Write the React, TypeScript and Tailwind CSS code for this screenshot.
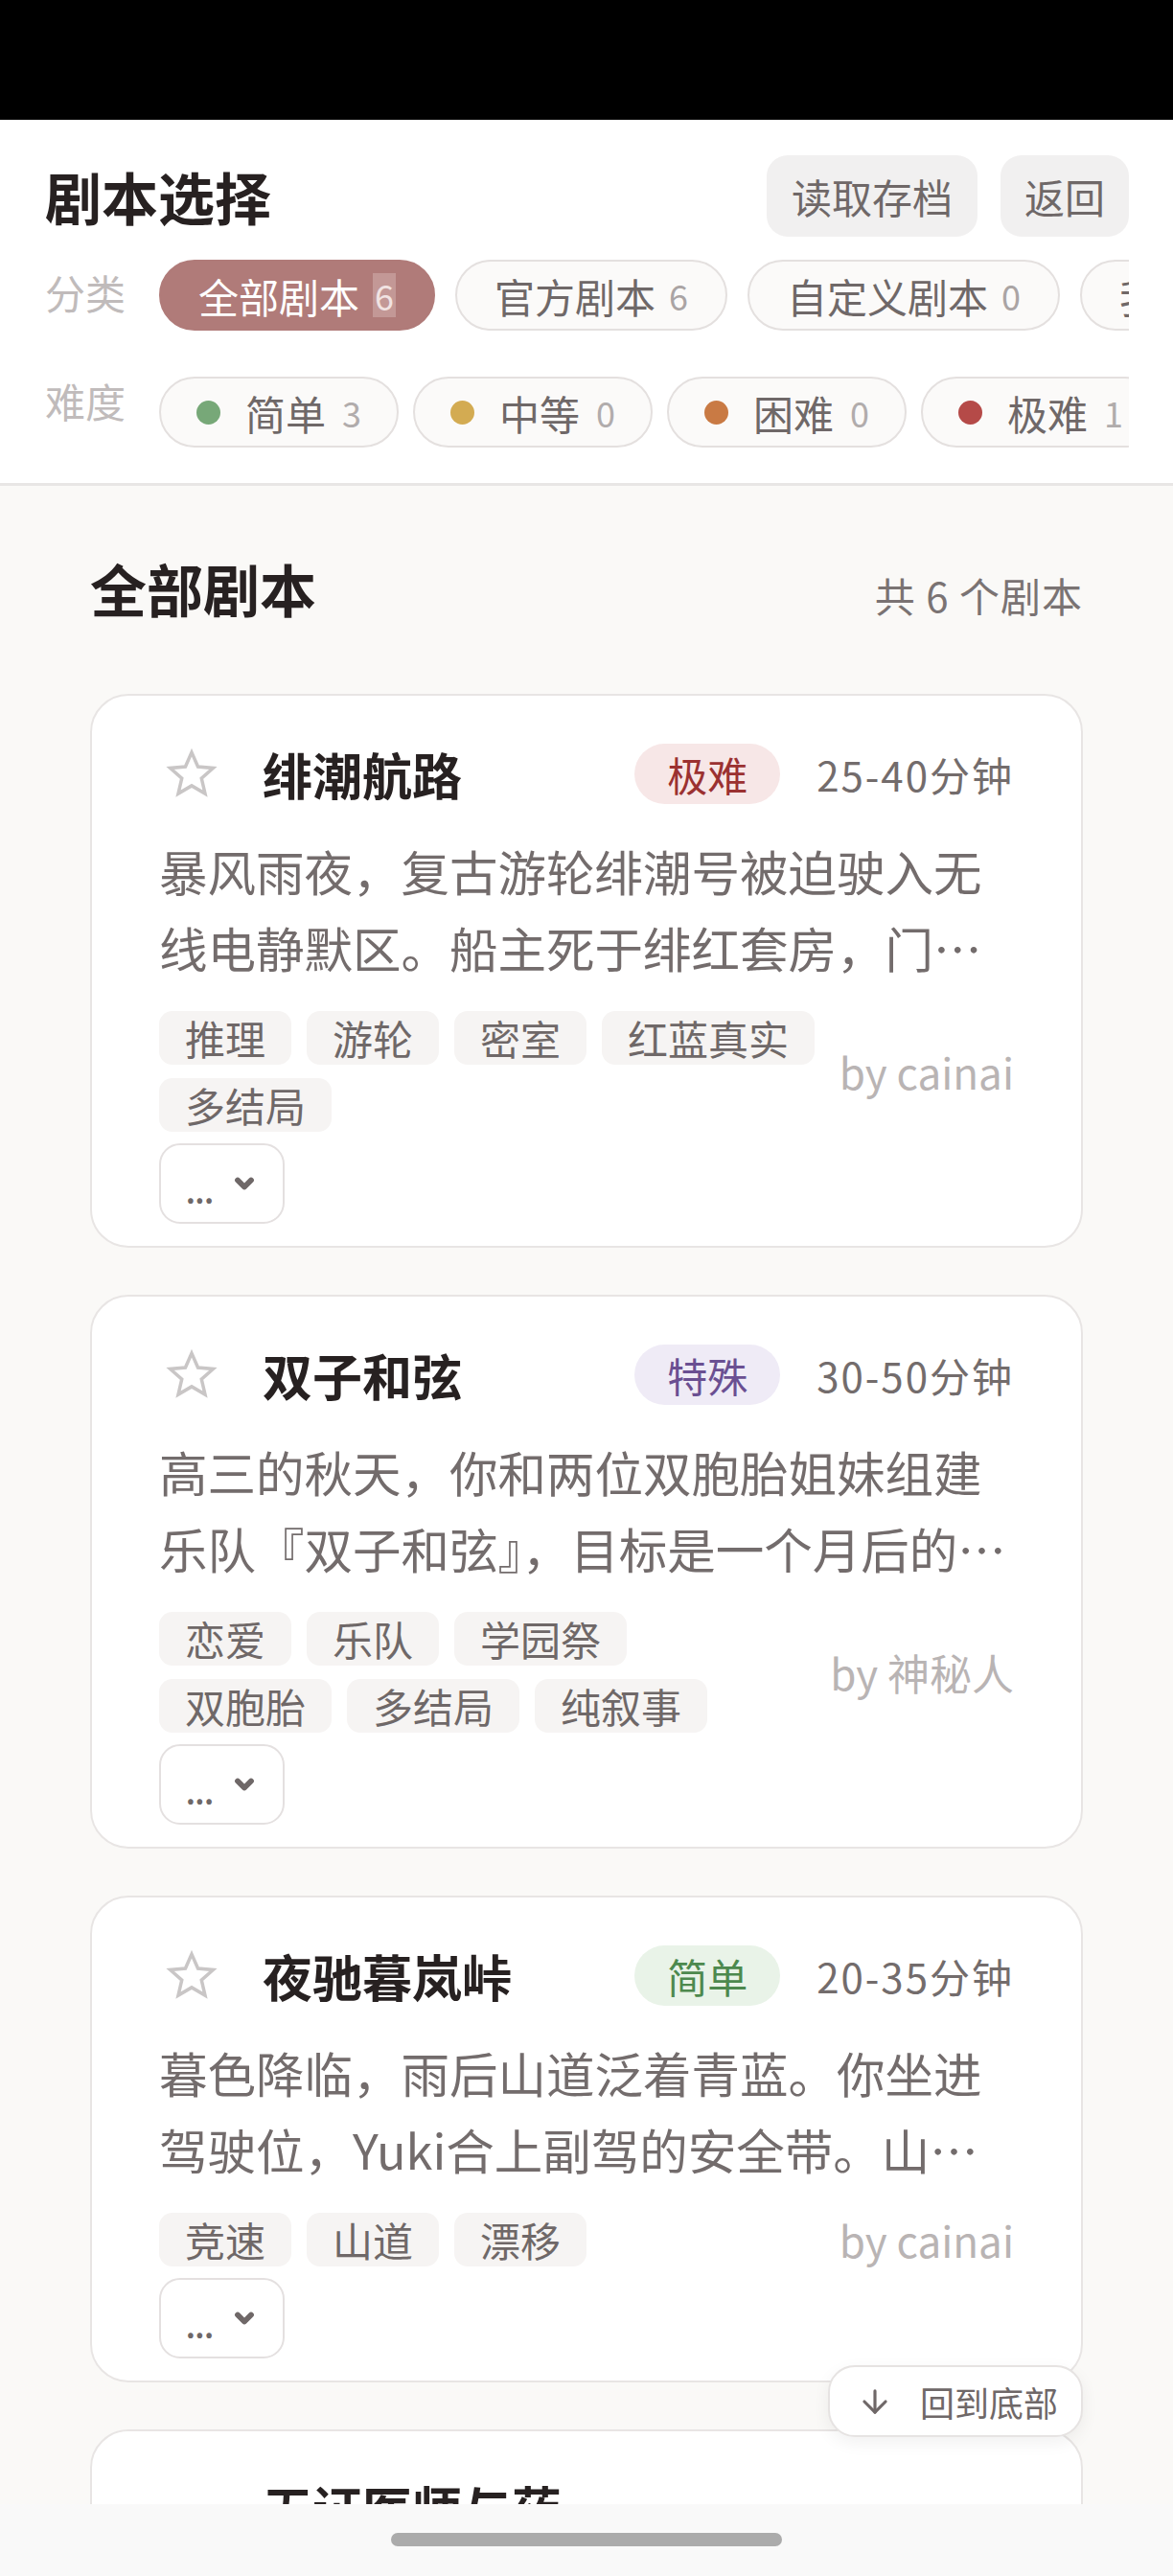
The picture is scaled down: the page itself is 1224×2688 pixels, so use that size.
import { ArrowDown, ChevronDown } from 'lucide-react'

type Tone = 'extreme' | 'special' | 'easy'

type Script = {
  title: string
  level: string
  tone: Tone
  time: string
  desc: string
  tags: string[][]
  author: string
}

const toneClass: Record<Tone, string> = {
  extreme: 'bg-[#f7e7e7] text-[#9b3131]',
  special: 'bg-[#efebf6] text-[#6a4f92]',
  easy: 'bg-[#e9f3e8] text-[#4d894e]',
}

const scripts: Script[] = [
  {
    title: '绯潮航路',
    level: '极难',
    tone: 'extreme',
    time: '25-40分钟',
    desc: '暴风雨夜，复古游轮绯潮号被迫驶入无线电静默区。船主死于绯红套房，门窗皆从内部反锁。',
    tags: [['推理', '游轮', '密室', '红蓝真实'], ['多结局']],
    author: 'cainai',
  },
  {
    title: '双子和弦',
    level: '特殊',
    tone: 'special',
    time: '30-50分钟',
    desc: '高三的秋天，你和两位双胞胎姐妹组建乐队『双子和弦』，目标是一个月后的学园祭。',
    tags: [['恋爱', '乐队', '学园祭'], ['双胞胎', '多结局', '纯叙事']],
    author: '神秘人',
  },
  {
    title: '夜驰暮岚峠',
    level: '简单',
    tone: 'easy',
    time: '20-35分钟',
    desc: '暮色降临，雨后山道泛着青蓝。你坐进驾驶位，Yuki合上副驾的安全带。山顶见。',
    tags: [['竞速', '山道', '漂移']],
    author: 'cainai',
  },
  {
    title: '无证医师与药剂师',
    level: '简单',
    tone: 'easy',
    time: '30-45分钟',
    desc: '小镇的诊所在深夜亮起了灯。',
    tags: [['医疗']],
    author: 'cainai',
  },
]

const categories = [
  { label: '全部剧本', count: 6, active: true },
  { label: '官方剧本', count: 6 },
  { label: '自定义剧本', count: 0 },
  { label: '我的收藏', count: 0 },
]

const levels = [
  { label: '简单', count: 3, dot: 'bg-[#77a878]' },
  { label: '中等', count: 0, dot: 'bg-[#d3ab52]' },
  { label: '困难', count: 0, dot: 'bg-[#c97a44]' },
  { label: '极难', count: 1, dot: 'bg-[#b54a48]' },
]

const StarIcon = () => (
  <svg width="56" height="56" viewBox="0 0 24 24" fill="none" stroke="#c9c6c6" strokeWidth="1.5" strokeLinejoin="miter">
    <polygon points="12,2.2 14.8,8.6 21.6,9.2 16.4,13.8 18,20.6 12,17.1 6,20.6 7.6,13.8 2.4,9.2 9.2,8.6" />
  </svg>
)

const ScriptCard = ({ script }: { script: Script }) => (
  <article className="shrink-0 rounded-[40px] border-2 border-[#e8e5e4] bg-white px-[70px] pt-[50px] pb-[23px]">
    <div className="flex items-center">
      <span className="flex w-[68px] shrink-0 justify-center">
        <StarIcon />
      </span>
      <h3 className="ml-[40px] min-w-0 flex-1 text-[52px] font-bold leading-[60px] text-[#272121]">
        {script.title}
      </h3>
      <span className={`ml-[40px] flex h-[63px] shrink-0 items-center rounded-full px-[34px] text-[42px] ${toneClass[script.tone]}`}>
        {script.level}
      </span>
      <span className="ml-[38px] shrink-0 text-[42px] tracking-[2px] text-[#736c6c]">{script.time}</span>
    </div>
    <p className="mt-[29px] line-clamp-2 overflow-hidden text-[50.5px] leading-[80px] text-[#736c6c]">{script.desc}</p>
    <div className="mt-[27px] flex items-center justify-between gap-[24px]">
      <div className="flex flex-col gap-[14px]">
        {script.tags.map((row, i) => (
          <div key={i} className="flex gap-[16px]">
            {row.map((tag) => (
              <span
                key={tag}
                className="flex h-[56px] items-center rounded-[14px] bg-[#f6f4f3] px-[27px] text-[42px] leading-none text-[#6f6868]"
              >
                {tag}
              </span>
            ))}
          </div>
        ))}
      </div>
      <span className="shrink-0 text-[44px] leading-[56px] text-[#b9b4b4]">by {script.author}</span>
    </div>
    <button className="mt-[12px] flex h-[84px] w-[131px] items-center justify-center gap-[18px] rounded-[22px] border-2 border-[#e4e0e0] bg-white text-[#6f6868]">
      <span className="pt-[16px] text-[30px] font-bold leading-none">...</span>
      <ChevronDown size={28} strokeWidth={5} />
    </button>
  </article>
)

export default function App() {
  return (
    <div className="relative flex h-[2688px] w-[1224px] flex-col overflow-hidden bg-[#faf9f7] font-['Noto_Sans_CJK_SC','Noto_Sans',sans-serif]">
      <div className="h-[125px] shrink-0 bg-black" />

      <header className="shrink-0 border-b-[3px] border-[#e8e6e5] bg-white pt-[37px] pr-[46px] pb-[37px] pl-[47px]">
        <div className="flex items-center justify-between">
          <h1 className="text-[59px] font-bold leading-[85px] text-[#272121]">剧本选择</h1>
          <div className="flex gap-[24px]">
            <button className="h-[85px] rounded-[22px] bg-[#f1f0f0] px-[26px] text-[42px] text-[#6f6868]">读取存档</button>
            <button className="h-[85px] rounded-[22px] bg-[#f1f0f0] px-[25px] text-[42px] text-[#6f6868]">返回</button>
          </div>
        </div>

        <div className="mt-[24px] flex items-start">
          <span className="w-[119px] shrink-0 text-[42px] leading-[68px] text-[#c0bbbb]">分类</span>
          <div className="flex min-w-0 flex-1 gap-[21px] overflow-hidden">
            {categories.map((c) => (
              <span
                key={c.label}
                className={
                  c.active
                    ? 'flex h-[74px] shrink-0 items-center gap-[14px] rounded-full border-2 border-[#b07b79] bg-[#b07b79] px-[39px] text-[42px] text-white'
                    : 'flex h-[74px] shrink-0 items-center gap-[14px] rounded-full border-2 border-[#e4e0df] bg-[#fbfaf9] px-[39px] text-[42px] text-[#6f6868]'
                }
              >
                {c.label}
                <span
                  className={
                    c.active
                      ? 'bg-[#c39896] px-[2px] text-[36px] leading-[46px] text-[#f1e3e2]'
                      : 'text-[36px] leading-[46px] text-[#aaa4a4]'
                  }
                >
                  {c.count}
                </span>
              </span>
            ))}
          </div>
        </div>

        <div className="mt-[48px] flex items-start">
          <span className="w-[119px] shrink-0 text-[42px] leading-[50px] text-[#c0bbbb]">难度</span>
          <div className="flex min-w-0 flex-1 gap-[15px] overflow-hidden">
            {levels.map((l) => (
              <span
                key={l.label}
                className="flex h-[74px] shrink-0 items-center gap-[17px] rounded-full border-2 border-[#e4e0df] bg-[#fbfaf9] px-[37px] text-[42px] text-[#6f6868]"
              >
                <span className={`mr-[9px] h-[25px] w-[25px] rounded-full ${l.dot}`} />
                {l.label}
                <span className="text-[36px] text-[#b1acac]">{l.count}</span>
              </span>
            ))}
          </div>
        </div>
      </header>

      <main className="min-h-0 flex-1 overflow-hidden px-[94px] pt-[63px]">
        <div className="flex items-baseline justify-between">
          <h2 className="text-[59px] font-bold leading-[87px] text-[#272121]">全部剧本</h2>
          <span className="text-[42px] tracking-[1px] text-[#7a7373]">共 6 个剧本</span>
        </div>
        <div className="mt-[67px] flex flex-col gap-[49px]">
          {scripts.map((s) => (
            <ScriptCard key={s.title} script={s} />
          ))}
        </div>
      </main>

      <div className="flex h-[75px] shrink-0 justify-center bg-[#f9f9f9] pt-[30px]">
        <div className="h-[14px] w-[408px] rounded-full bg-[#ababab]" />
      </div>

      <button className="absolute right-[94px] bottom-[145px] flex h-[75px] items-center gap-[28px] rounded-[28px] border-2 border-[#e6e3e2] bg-white pr-[24px] pl-[28px] text-[36px] text-[#6f6868] shadow-[0_6px_18px_rgba(0,0,0,0.06)]">
        <ArrowDown size={38} strokeWidth={2} />
        回到底部
      </button>
    </div>
  )
}
